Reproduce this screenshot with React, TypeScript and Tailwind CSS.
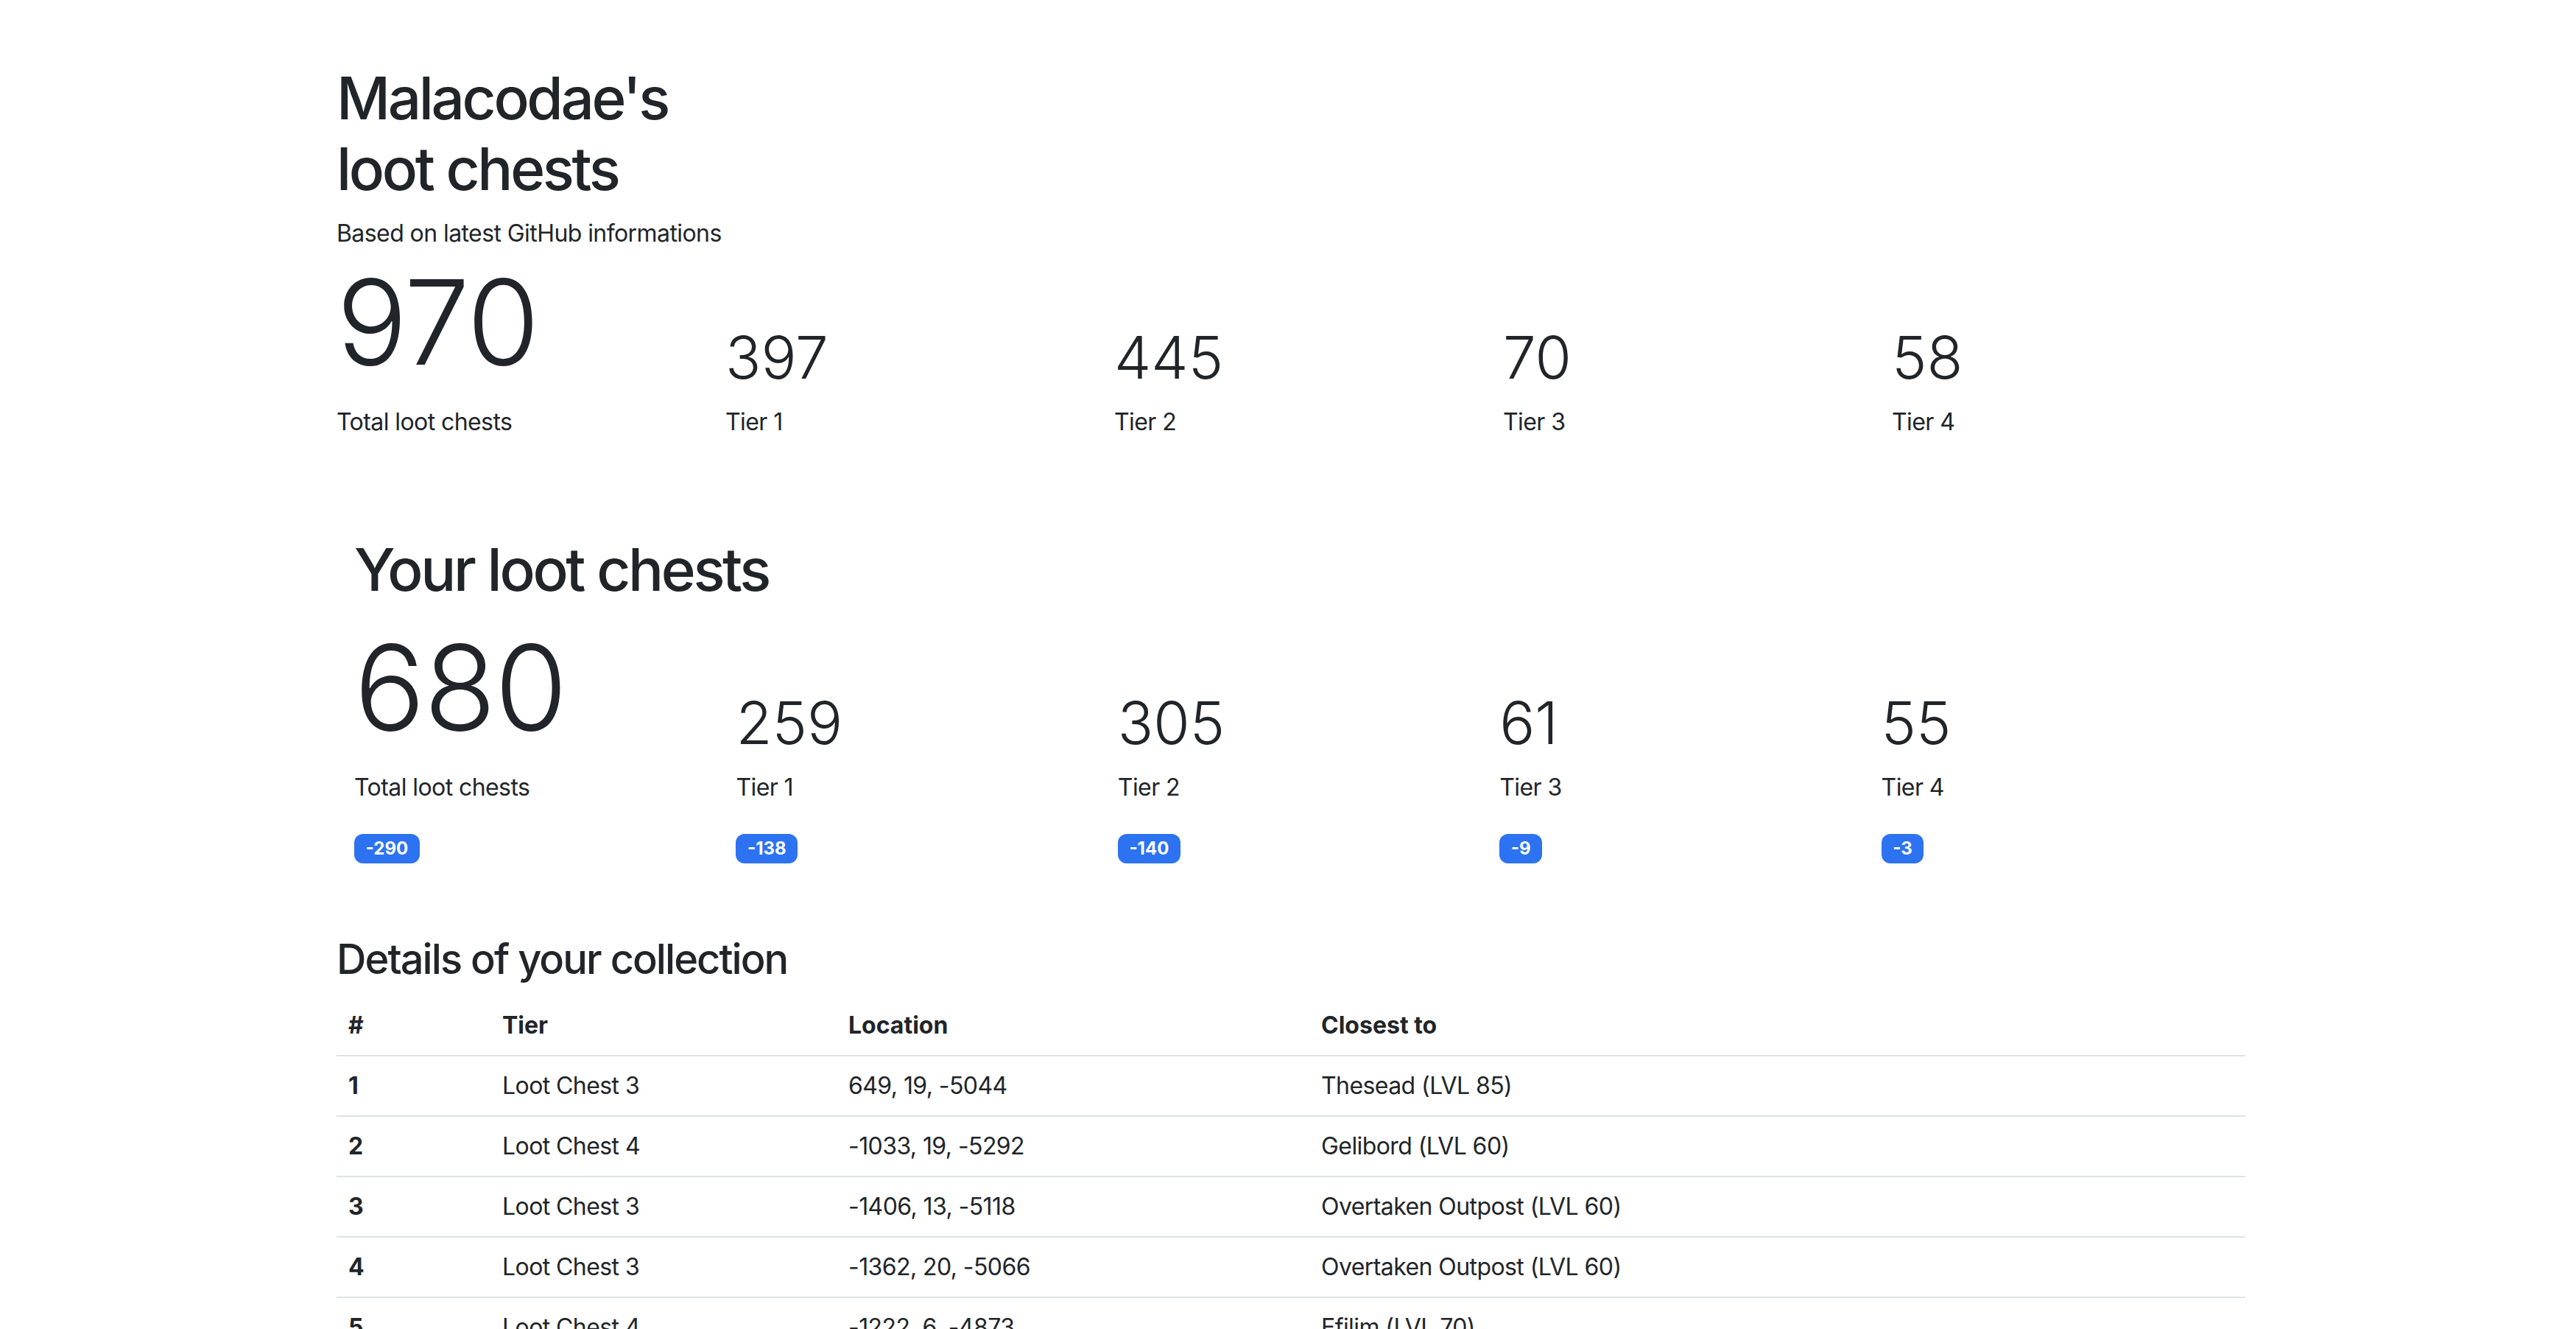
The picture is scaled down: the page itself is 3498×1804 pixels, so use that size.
import React from 'react'

const allChests = [
  { value: 970, label: 'Total loot chests' },
  { value: 397, label: 'Tier 1' },
  { value: 445, label: 'Tier 2' },
  { value: 70, label: 'Tier 3' },
  { value: 58, label: 'Tier 4' },
]

const yourChests = [
  { value: 680, label: 'Total loot chests', diff: -290 },
  { value: 259, label: 'Tier 1', diff: -138 },
  { value: 305, label: 'Tier 2', diff: -140 },
  { value: 61, label: 'Tier 3', diff: -9 },
  { value: 55, label: 'Tier 4', diff: -3 },
]

const rows = [
  { id: 1, tier: 'Loot Chest 3', location: '649, 19, -5044', closest: 'Thesead (LVL 85)' },
  { id: 2, tier: 'Loot Chest 4', location: '-1033, 19, -5292', closest: 'Gelibord (LVL 60)' },
  { id: 3, tier: 'Loot Chest 3', location: '-1406, 13, -5118', closest: 'Overtaken Outpost (LVL 60)' },
  { id: 4, tier: 'Loot Chest 3', location: '-1362, 20, -5066', closest: 'Overtaken Outpost (LVL 60)' },
  { id: 5, tier: 'Loot Chest 4', location: '-1222, 6, -4873', closest: 'Efilim (LVL 70)' },
  { id: 6, tier: 'Loot Chest 2', location: '-1195, 9, -4790', closest: 'Efilim (LVL 70)' },
]

export default function App() {
  return (
    <div className="h-screen overflow-hidden bg-white font-['Inter','Liberation_Sans',sans-serif] text-[#212529]">
      <div className="ml-[457px] w-[2592px] pt-[85px]">
        <h1 className="mb-4 w-[480px] text-[80px] font-medium leading-[1.2] tracking-[-0.042em]">Malacodae's loot chests</h1>
        <p className="text-[32px] leading-[48px] tracking-[-0.018em]">Based on latest GitHub informations</p>

        <div className="-mx-6 grid grid-cols-5 items-end">
          {allChests.map((s, i) => (
            <div key={s.label} className="px-6">
              <div className={`font-light leading-[1.2] ${i === 0 ? 'text-[160px] tracking-[-0.01em]' : 'text-[80px]'}`}>{s.value}</div>
              <p className="mt-4 mb-8 text-[32px] leading-[48px] tracking-[-0.018em]">{s.label}</p>
            </div>
          ))}
        </div>

        <section className="mt-24">
          <h1 className="mb-4 px-6 text-[80px] font-medium leading-[1.2] tracking-[-0.042em]">Your loot chests</h1>
          <div className="grid grid-cols-5 items-end">
            {yourChests.map((s, i) => (
              <div key={s.label} className="px-6">
                <div className={`font-light leading-[1.2] ${i === 0 ? 'text-[160px] tracking-[-0.01em]' : 'text-[80px]'}`}>{s.value}</div>
                <p className="mt-4 mb-8 text-[32px] leading-[48px] tracking-[-0.018em]">{s.label}</p>
                <div className="text-[32px] leading-[48px]">
                  <span className="inline-block rounded-[12px] bg-[#2d73f1] px-[15.6px] py-[8.4px] text-[24px] font-bold leading-none text-white">
                    {s.diff}
                  </span>
                </div>
              </div>
            ))}
          </div>
        </section>

        <h3 className="mt-24 mb-4 text-[56px] font-medium leading-[1.2] tracking-[-0.035em]">Details of your collection</h3>
        <table className="w-full table-fixed border-collapse text-left text-[32px] leading-[48px]">
          <thead>
            <tr className="border-b-2 border-[#dee2e6]">
              <th className="w-[209px] p-4 font-bold">#</th>
              <th className="w-[470px] p-4 font-bold">Tier</th>
              <th className="w-[642px] p-4 font-bold">Location</th>
              <th className="p-4 font-bold">Closest to</th>
            </tr>
          </thead>
          <tbody className="tracking-[-0.018em]">
            {rows.map(r => (
              <tr key={r.id} className="border-b-2 border-[#dee2e6]">
                <td className="p-4 font-bold">{r.id}</td>
                <td className="p-4">{r.tier}</td>
                <td className="p-4">{r.location}</td>
                <td className="p-4">{r.closest}</td>
              </tr>
            ))}
          </tbody>
        </table>
      </div>
    </div>
  )
}
